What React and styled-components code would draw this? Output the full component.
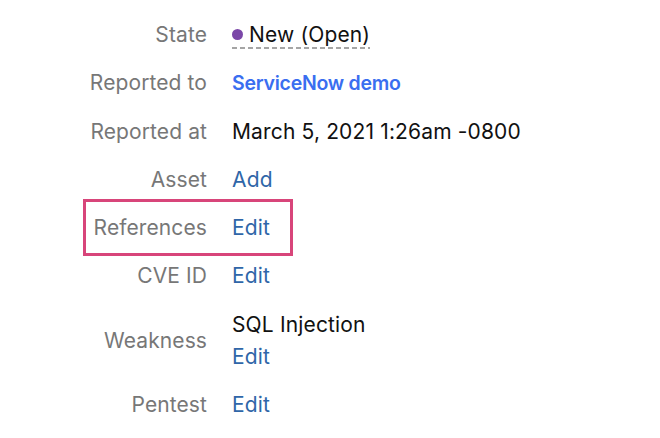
import React from "react";
import styled, { createGlobalStyle } from "styled-components";

const GlobalStyle = createGlobalStyle`
  body {
    margin: 0;
    background: #fff;
    font-family: Inter, "Noto Sans", sans-serif;
  }
`;

const Details = styled.div`
  display: flex;
  flex-direction: column;
  gap: 16.3px;
  padding-top: 19px;
`;

const Row = styled.div`
  position: relative;
  display: flex;
  align-items: center;
  gap: 25px;

  ${(p) =>
    p.highlight &&
    `
    &::before {
      content: "";
      position: absolute;
      left: 83px;
      top: -13px;
      width: 210px;
      bottom: -12px;
      box-sizing: border-box;
      border: 3.5px solid #d8457a;
    }
  `}
`;

const Label = styled.div`
  width: 207px;
  text-align: right;
  font-size: 21px;
  letter-spacing: 0.1px;
  line-height: 32px;
  color: #777;
`;

const Value = styled.div`
  display: flex;
  flex-direction: column;
  align-items: flex-start;
  font-size: 21px;
  letter-spacing: 0.15px;
  line-height: 32px;
  color: #111;
`;

const EditLink = styled.a`
  color: #2f66a8;
  text-decoration: none;
  cursor: pointer;
`;

const Tracker = styled.a`
  color: #3a6ef0;
  font-weight: 600;
  font-size: 19.5px;
  letter-spacing: -0.25px;
  text-decoration: none;
`;

const StateValue = styled.span`
  display: flex;
  align-items: center;
  gap: 6px;
  height: 32px;
  box-sizing: border-box;
  padding-top: 5px;
  padding-bottom: 1px;
  background-image: linear-gradient(to right, #a5a5a5 60%, transparent 60%);
  background-size: 8px 2px;
  background-repeat: repeat-x;
  background-position: left bottom;
  margin-bottom: 2px;
  margin-top: -2px;
`;

const Dot = styled.span`
  width: 11px;
  height: 11px;
  border-radius: 50%;
  background: ${(p) => p.color};
  margin-top: -2px;
`;

export default function App() {
  return (
    <>
      <GlobalStyle />
      <Details>
        <Row>
          <Label>State</Label>
          <Value>
            <StateValue>
              <Dot color="#7b47a8" />
              New (Open)
            </StateValue>
          </Value>
        </Row>
        <Row>
          <Label>Reported to</Label>
          <Value>
            <Tracker>ServiceNow demo</Tracker>
          </Value>
        </Row>
        <Row>
          <Label>Reported at</Label>
          <Value>March 5, 2021 1:26am -0800</Value>
        </Row>
        <Row>
          <Label>Asset</Label>
          <Value>
            <EditLink>Add</EditLink>
          </Value>
        </Row>
        <Row highlight>
          <Label>References</Label>
          <Value>
            <EditLink>Edit</EditLink>
          </Value>
        </Row>
        <Row>
          <Label>CVE ID</Label>
          <Value>
            <EditLink>Edit</EditLink>
          </Value>
        </Row>
        <Row>
          <Label>Weakness</Label>
          <Value>
            <span>SQL Injection</span>
            <EditLink>Edit</EditLink>
          </Value>
        </Row>
        <Row>
          <Label>Pentest</Label>
          <Value>
            <EditLink>Edit</EditLink>
          </Value>
        </Row>
      </Details>
    </>
  );
}
